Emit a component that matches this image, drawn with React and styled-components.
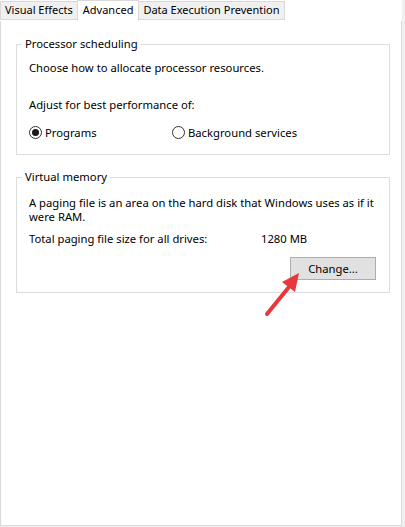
import React from 'react'
import styled, { createGlobalStyle } from 'styled-components'

const Global = createGlobalStyle`
  html, body {
    margin: 0;
    padding: 0;
    background: #ffffff;
  }
  body {
    font-family: "Noto Sans", "DejaVu Sans", sans-serif;
    font-size: 11.25px;
    color: #000;
  }
`

const Page = styled.div`
  position: relative;
  width: 405px;
  height: 527px;
  background: #f0f0f0;
  overflow: hidden;
`

const TabStrip = styled.div`
  display: flex;
  align-items: flex-end;
  height: 21px;
  background: #fff;
  width: 402px;
  position: relative;
  z-index: 1;
`

const Tab = styled.div`
  box-sizing: border-box;
  height: ${p => (p.active ? '21px' : '19px')};
  margin-bottom: ${p => (p.active ? '0' : '1px')};
  padding: 0 ${p => (p.active ? '5px' : '4px')};
  margin-left: ${p => (p.active ? '-1px' : '0')};
  margin-right: ${p => (p.active ? '-1px' : '0')};
  background: ${p => (p.active ? '#fff' : '#f0f0f0')};
  border: 1px solid #d9d9d9;
  border-bottom: ${p => (p.active ? 'none' : '1px solid #d9d9d9')};
  font-size: 11px;
  line-height: ${p => (p.active ? '18px' : '16px')};
  white-space: nowrap;
  position: relative;
  z-index: ${p => (p.active ? 2 : 1)};
`

const Panel = styled.div`
  box-sizing: border-box;
  width: 402px;
  height: 506px;
  margin-top: -1px;
  background: #fff;
  border: 1px solid #d9d9d9;
  padding: 15px 12px 0 15px;
`

const Group = styled.fieldset`
  box-sizing: border-box;
  width: 374px;
  height: ${p => p.h}px;
  margin: 0 0 ${p => p.gap || 0}px 0;
  padding: 0 13px 0 12px;
  border: 1px solid #dcdcdc;
  min-width: 0;
`

const Legend = styled.legend`
  padding: 0 3px;
  margin-left: -7px;
  line-height: 16px;
`

const Line = styled.div`
  line-height: 14px;
  margin-top: ${p => p.top || 0}px;
`

const RadioRow = styled.div`
  display: flex;
  align-items: center;
  margin-top: ${p => p.top || 0}px;
  height: 16px;
`

const RadioItem = styled.label`
  display: flex;
  align-items: center;
  gap: 3px;
  width: ${p => p.w}px;
`

const Circle = styled.span`
  box-sizing: border-box;
  width: 13px;
  height: 13px;
  border-radius: 50%;
  border: 1px solid #333;
  display: flex;
  align-items: center;
  justify-content: center;
  &::after {
    content: '';
    width: 7px;
    height: 7px;
    border-radius: 50%;
    background: ${p => (p.checked ? '#1a1a1a' : 'transparent')};
  }
`

const SizeRow = styled.div`
  display: flex;
  line-height: 14px;
  margin-top: ${p => p.top || 0}px;
`

const SizeLabel = styled.span`
  width: 232px;
`

const ButtonRow = styled.div`
  display: flex;
  justify-content: flex-end;
  margin-top: 11px;
`

const Button = styled.button`
  box-sizing: border-box;
  width: 86px;
  height: 23px;
  background: #e1e1e1;
  border: 1px solid #adadad;
  font: inherit;
  color: #000;
  padding: 0;
`

const Arrow = styled.svg`
  position: absolute;
  left: 262px;
  top: 268px;
`

export default function App() {
  return (
    <>
      <Global />
      <Page>
        <TabStrip>
          <Tab>Visual Effects</Tab>
          <Tab active>Advanced</Tab>
          <Tab>Data Execution Prevention</Tab>
        </TabStrip>
        <Panel>
          <Group h={119} gap={14}>
            <Legend>Processor scheduling</Legend>
            <Line top={9}>Choose how to allocate processor resources.</Line>
            <Line top={23}>Adjust for best performance of:</Line>
            <RadioRow top={12}>
              <RadioItem w={143}>
                <Circle checked />
                Programs
              </RadioItem>
              <RadioItem>
                <Circle />
                Background services
              </RadioItem>
            </RadioRow>
          </Group>
          <Group h={124}>
            <Legend>Virtual memory</Legend>
            <Line top={11}>
              A paging file is an area on the hard disk that Windows uses as if it
              were RAM.
            </Line>
            <SizeRow top={8}>
              <SizeLabel>Total paging file size for all drives:</SizeLabel>
              <span>1280 MB</span>
            </SizeRow>
            <ButtonRow>
              <Button>Change...</Button>
            </ButtonRow>
          </Group>
        </Panel>
        <Arrow width="44" height="52" viewBox="0 0 44 52">
          <line x1="5" y1="46" x2="27" y2="19" stroke="#e8383b" strokeWidth="4" strokeLinecap="round" />
          <polygon points="37,5 20,14 33,24" fill="#e8383b" />
        </Arrow>
      </Page>
    </>
  )
}
